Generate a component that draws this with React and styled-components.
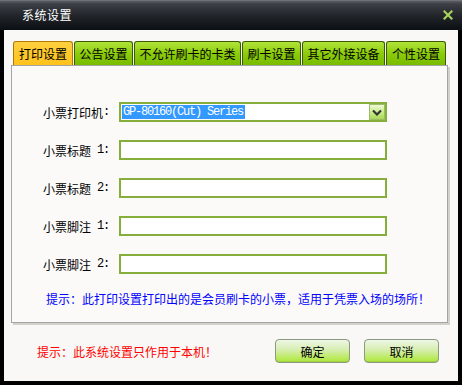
import React from "react";
import styled, { createGlobalStyle } from "styled-components";

const Global = createGlobalStyle`
  html, body { margin: 0; padding: 0; background: #000; }
  body { font-family: "Noto Sans CJK SC", "Liberation Sans", sans-serif; font-size: 12px; }
  * { box-sizing: border-box; }
`;

const Window = styled.div`
  width: 462px;
  height: 385px;
  background: #000;
  display: flex;
  flex-direction: column;
`;

const TitleBar = styled.div`
  height: 30px;
  flex: none;
  display: flex;
  align-items: center;
  justify-content: space-between;
  padding: 0 9px 2px 22px;
  background: linear-gradient(#808488 0px, #5a5e63 1px, #3c4046 4px, #23272c 15px, #0b0f13 30px);
  color: #fff;
  font-size: 12px;
  letter-spacing: 0.5px;
`;

const Close = styled.svg`
  width: 10px;
  height: 10px;
  margin-top: 1px;
`;

const Body = styled.div`
  flex: 1;
  margin: 0 4px 4px 4px;
  background: #f9f8f6;
  padding: 11px 0 0 7px;
  display: flex;
  flex-direction: column;
`;

const Tabs = styled.div`
  display: flex;
  gap: 1px;
  padding-left: 2px;
  height: 24px;
`;

const Tab = styled.div`
  height: 24px;
  padding: 0 4px;
  display: flex;
  align-items: center;
  justify-content: center;
  width: ${(p) => p.$w}px;
  border: 1px solid ${(p) => (p.$active ? "#b07a00" : "#3c5a00")};
  border-bottom: none;
  border-radius: 3px 3px 0 0;
  background: ${(p) =>
    p.$active
      ? "linear-gradient(#ffd040, #ffc21a)"
      : "linear-gradient(#b2e43a, #8ccc0c 50%, #78bc00)"};
  color: #000;
  font-size: 12px;
  white-space: nowrap;
`;

const Panel = styled.div`
  width: 437px;
  height: 258px;
  background: #fbfaf8;
  border: 1px solid #a4a4a4;
  box-shadow: 2px 2px 0 #d2d2cc;
  padding: 36px 0 0 0;
  display: flex;
  flex-direction: column;
`;

const Form = styled.div`
  display: grid;
  grid-template-columns: 98px 268px;
  column-gap: 9px;
  row-gap: 18px;
  grid-auto-rows: 20px;
`;

const Label = styled.div`
  display: flex;
  align-items: center;
  justify-content: flex-end;
  font-size: 12px;
  color: #000;
  white-space: pre;
`;

const Half = styled.span`
  font-family: "Liberation Mono", "DejaVu Sans Mono", monospace;
  font-size: 12px;
  letter-spacing: -1.2px;
  padding-right: 1px;
`;

const Field = styled.div`
  height: 20px;
  border: 2px solid #86ae3a;
  background: #fff;
  position: relative;
  display: flex;
  align-items: center;
  padding-left: 1px;
`;

const Selected = styled.span`
  background: #3399ff;
  color: #fff;
  font-family: "Liberation Mono", "DejaVu Sans Mono", monospace;
  font-size: 12px;
  letter-spacing: -1.2px;
  line-height: 14px;
  padding: 0 2px 0 1px;
`;

const DropBtn = styled.div`
  position: absolute;
  right: 0px;
  top: 0px;
  width: 16px;
  height: 16px;
  border: 1px solid #9cbc6a;
  background: linear-gradient(#eef9d8, #c4ea80 60%, #a8d858);
  display: flex;
  align-items: center;
  justify-content: center;
`;

const Hint = styled.div`
  margin-top: 18px;
  padding-left: 34px;
  color: #0000ff;
  font-size: 12px;
  line-height: 14px;
  white-space: nowrap;
`;

const Footer = styled.div`
  margin-top: 16px;
  display: flex;
  align-items: center;
  padding: 0 19px 0 26px;
  height: 24px;
`;

const Note = styled.div`
  color: #ff0000;
  font-size: 12px;
  flex: 1;
  white-space: nowrap;
`;

const Buttons = styled.div`
  display: flex;
  gap: 14px;
`;

const Button = styled.div`
  width: 75px;
  height: 24px;
  border: 1px solid #8c9a80;
  border-radius: 4px;
  background: linear-gradient(#eef6e6 0%, #d6eeb0 45%, #b8ea56 85%, #aee440 100%);
  display: flex;
  align-items: center;
  justify-content: center;
  color: #000;
  font-size: 12px;
  box-shadow: inset 0 -1px 0 #9ed040;
`;

const tabs = [
  { t: "打印设置", w: 60, a: true },
  { t: "公告设置", w: 59 },
  { t: "不允许刷卡的卡类", w: 107 },
  { t: "刷卡设置", w: 59 },
  { t: "其它外接设备", w: 83 },
  { t: "个性设置", w: 60 },
];

const rows = [
  ["小票标题", " 1:"],
  ["小票标题", " 2:"],
  ["小票脚注", " 1:"],
  ["小票脚注", " 2:"],
];

export default function App() {
  return (
    <Window>
      <Global />
      <TitleBar>
        <span>系统设置</span>
        <Close viewBox="0 0 10 10">
          <path d="M1.5 1.5 L8.5 8.5 M8.5 1.5 L1.5 8.5" stroke="#a6d25a" strokeWidth="2.2" strokeLinecap="square" />
        </Close>
      </TitleBar>
      <Body>
        <Tabs>
          {tabs.map((x) => (
            <Tab key={x.t} $active={x.a} $w={x.w}>
              {x.t}
            </Tab>
          ))}
        </Tabs>
        <Panel>
          <Form>
            <Label>
              小票打印机<Half>:</Half>
            </Label>
            <Field>
              <Selected>GP-80160(Cut) Series</Selected>
              <DropBtn>
                <svg width="10" height="7" viewBox="0 0 10 7">
                  <path d="M1 1.5 L5 5.5 L9 1.5" stroke="#333" strokeWidth="2.2" fill="none" />
                </svg>
              </DropBtn>
            </Field>
            {rows.map(([a, b]) => (
              <React.Fragment key={a + b}>
                <Label>
                  {a}
                  <Half>{b}</Half>
                </Label>
                <Field />
              </React.Fragment>
            ))}
          </Form>
          <Hint>提示：此打印设置打印出的是会员刷卡的小票，适用于凭票入场的场所！</Hint>
        </Panel>
        <Footer>
          <Note>提示：此系统设置只作用于本机！</Note>
          <Buttons>
            <Button>确定</Button>
            <Button>取消</Button>
          </Buttons>
        </Footer>
      </Body>
    </Window>
  );
}
